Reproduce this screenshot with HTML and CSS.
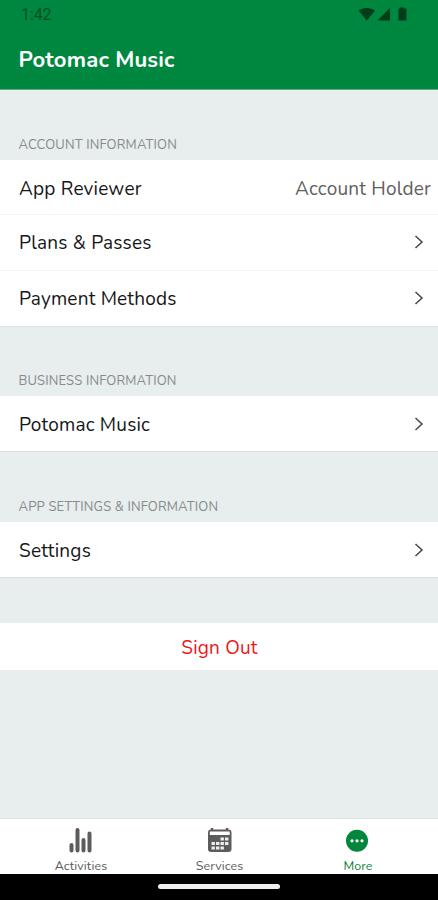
FILE: index.html
```html
<!DOCTYPE html>
<html lang="en">
<head>
<meta charset="utf-8">
<meta name="viewport" content="width=device-width, initial-scale=1">
<title>Potomac Music</title>
<link rel="stylesheet" href="styles.css">
</head>
<body>
<header class="header">
  <div class="status">
    <span class="time">1:42</span>
    <svg class="status-icons" width="50" height="15" viewBox="0 0 50 15" fill="#003d18"><path d="M-0.500 3.500C4 0 11.500 0 16 3.500L7.800 13.500Z"/><path d="M31 1V13.500H18.500Z"/><path d="M41 0.500H45V1.500H47.500V13.500H39.500V1.500H41Z"/></svg>
  </div>
  <h1 class="title">Potomac Music</h1>
</header>
<main class="content">
  <h2 class="section-title">ACCOUNT INFORMATION</h2>
  <ul class="list list-account">
    <li class="row"><span>App Reviewer</span><span class="role">Account Holder</span></li>
    <li class="row"><span>Plans &amp; Passes</span><svg class="chevron" viewBox="0 0 10 14"><path d="M1.500 1L8 7L1.500 13"/></svg></li>
    <li class="row"><span>Payment Methods</span><svg class="chevron" viewBox="0 0 10 14"><path d="M1.500 1L8 7L1.500 13"/></svg></li>
  </ul>
  <h2 class="section-title">BUSINESS INFORMATION</h2>
  <ul class="list">
    <li class="row"><span>Potomac Music</span><svg class="chevron" viewBox="0 0 10 14"><path d="M1.500 1L8 7L1.500 13"/></svg></li>
  </ul>
  <h2 class="section-title">APP SETTINGS &amp; INFORMATION</h2>
  <ul class="list">
    <li class="row"><span>Settings</span><svg class="chevron" viewBox="0 0 10 14"><path d="M1.500 1L8 7L1.500 13"/></svg></li>
  </ul>
  <button class="sign-out">Sign Out</button>
</main>
<nav class="tabs">
  <a class="tab"><svg width="26" height="28" viewBox="0 0 26 28" stroke="#5c5c5c" stroke-width="4" stroke-linecap="round"><path d="M3.500 18V23.500M9.500 3V23.500M15.500 13V23.500M21.500 6.500V23.500"/></svg><span>Activities</span></a>
  <a class="tab"><svg width="26" height="28" viewBox="0 0 26 28"><path d="M5 1V5M20 1V5" stroke="#5c5c5c" stroke-width="2.400"/><rect x="1" y="2.500" width="23.500" height="22.500" rx="3" fill="#5c5c5c"/><path d="M2.800 4.500H22.700V8H2.800Z" fill="#fff"/><path d="M13.500 10.500H16.900V13.500H13.500ZM18 10.500H21.400V13.500H18ZM4.500 15H7.900V18H4.500ZM9 15H12.400V18H9ZM13.500 15H16.900V18H13.500ZM18 15H21.400V18H18ZM4.500 19.500H7.900V22.500H4.500ZM9 19.500H12.400V22.500H9ZM13.500 19.500H16.900V22.500H13.500Z" fill="#eee"/></svg><span>Services</span></a>
  <a class="tab active"><svg width="26" height="28" viewBox="0 0 26 28"><circle cx="12" cy="13.800" r="11" fill="#00873c"/><g fill="#fff"><circle cx="7" cy="13.800" r="1.600"/><circle cx="12" cy="13.800" r="1.600"/><circle cx="17" cy="13.800" r="1.600"/></g></svg><span>More</span></a>
</nav>
<footer class="system-bar"><div class="handle"></div></footer>
</body>
</html>
```

FILE: styles.css
```css
* { box-sizing: border-box; }
body {
  margin: 0;
  height: 900px;
  display: flex;
  flex-direction: column;
  overflow: hidden;
  background: #e8eded;
  color: #161616;
  font-family: Nunito, "Noto Sans", sans-serif;
}
.header { height: 90px; background: #00873f; border-bottom: 1px solid #69a77d; }
.status { display: flex; justify-content: space-between; height: 30px; padding: 7px 29px 0 21px; }
.status-icons { overflow: visible; }
.time { font: 16px/16px Roboto, sans-serif; color: #00511f; letter-spacing: -0.1px; }
.title { margin: 15px 0 0 18.500px; font-size: 22px; line-height: 30px; font-weight: 700; letter-spacing: 0.2px; color: #fff; }
.content { flex: 1; }
.section-title {
  display: flex;
  align-items: flex-end;
  height: 70px;
  margin: 0;
  padding: 0 18.500px 6px;
  font-size: 13px;
  line-height: 18px;
  font-weight: 400;
  letter-spacing: 0.160px;
  color: #868b8b;
}
.list { margin: 0; padding: 0; list-style: none; background: #fff; border-bottom: 1px solid #dce0e0; }
.list-account { margin-bottom: -1px; }
.row {
  display: flex;
  align-items: center;
  justify-content: space-between;
  height: 55px;
  padding: 2px 14px 0 19px;
  font-size: 19px;
  letter-spacing: 0.200px;
  white-space: nowrap;
}
.row + .row { height: 56px; border-top: 1px solid #f3f4f4; }
.list-account .row:first-child { height: 54px; padding: 3px 7px 0 19px; }
.list-account .row:nth-child(n + 2) { padding-top: 1px; }
.role { color: #606060; }
.chevron { width: 10px; height: 14px; margin-top: -2px; fill: none; stroke: #4c4c4c; stroke-width: 1.600; }
.sign-out {
  display: block;
  width: 100%;
  height: 47px;
  margin-top: 45px;
  padding: 2px 0 0 1px;
  border: 0;
  background: #fff;
  color: #ec1717;
  font: 19px Nunito, "Noto Sans", sans-serif;
  letter-spacing: 0.200px;
}
.tabs {
  display: flex;
  justify-content: space-between;
  height: 56px;
  padding: 8px 11px 0 12px;
  border-top: 1px solid #dfe2e2;
  background: #fff;
}
.tab { display: flex; flex-direction: column; align-items: center; width: 138px; font-size: 12.500px; line-height: 16px; letter-spacing: 0.100px; color: #5c5c5c; }
.tab svg { margin-bottom: 3px; }
.active { color: #147f3b; }
.system-bar { display: flex; justify-content: center; height: 26px; padding-top: 10px; background: #000; }
.handle { width: 122px; height: 5px; border-radius: 3px; background: #eee; }
```
